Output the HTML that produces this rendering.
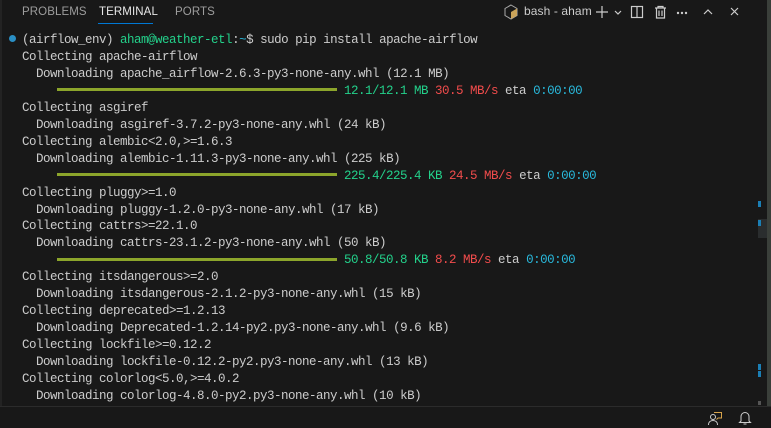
<!DOCTYPE html>
<html style="height:428px;overflow:hidden"><head><style>
body{margin:0;width:771px;height:428px;background:#181818;overflow:hidden;position:relative;font-family:"Liberation Sans",sans-serif}
.tabs{position:absolute;top:0;left:0;height:26px;width:771px}
.tab{position:absolute;top:6px;font-size:11.5px;color:#9d9d9d;letter-spacing:0.1px}
.term{position:absolute;left:22px;top:32px;font-family:"Liberation Mono",monospace;font-size:12.5px;letter-spacing:-0.5px;line-height:16.95px;color:#cccccc;white-space:pre}
.g{color:#23d18b}.r{color:#f14c4c}.b{color:#29b8db}
.bar{display:inline-block;width:280px;height:3px;background:#8ca52b;vertical-align:middle;margin:0 7px 0 35px;position:relative;top:-1px}
.status{position:absolute;left:0;top:406px;width:771px;height:22px;background:#181818;border-top:1px solid #2b2b2b}
.mk{position:absolute;left:758px;width:3px;height:6px;background:#1b7fb5}
</style></head><body>
<div style="position:absolute;left:0;top:0;width:2px;height:428px;background:#232323"></div>
<div style="position:absolute;left:767px;top:0;width:4px;height:428px;background:#3a3f3a"></div>
<div class="tabs">
<span class="tab" style="left:22px">PROBLEMS</span>
<span class="tab" style="left:99px;color:#e7e7e7">TERMINAL</span>
<div style="position:absolute;left:98px;top:23px;width:55px;height:1px;background:#0078d4"></div>
<span class="tab" style="left:175px">PORTS</span>
<svg style="position:absolute;left:504px;top:4px" width="14" height="16" viewBox="0 0 14 16"><path d="M7 1L13 4.5V11.5L7 15L1 11.5V4.5Z" fill="none" stroke="#aaa" stroke-width="1"/><path d="M7 8L13 4.5V11.5L7 15Z" fill="#c9a35a"/></svg>
<span class="tab" style="left:524px;color:#ccc;font-size:12px;top:4px">bash - aham</span>
<svg style="position:absolute;left:595px;top:4px" width="150" height="16" viewBox="0 0 150 16" fill="none" stroke="#ccc" stroke-width="1.2">
<path d="M1 8H13M7 2V14"/><path d="M20 7l3 3 3-3"/>
<rect x="36.5" y="2.5" width="11" height="11"/><path d="M42 2.5V13.5"/>
<path d="M60 4H71M63 4V2.5H68V4M61.5 4.5V14H69.5V4.5M64 6.5V12M67 6.5V12"/>
<circle cx="83" cy="9" r=".6" fill="#ccc"/><circle cx="87" cy="9" r=".6" fill="#ccc"/><circle cx="91" cy="9" r=".6" fill="#ccc"/>
<path d="M109 10l4-4 4 4"/><path d="M136 4l7 7M143 4l-7 7"/>
</svg>
</div>
<div style="position:absolute;left:9px;top:35px;width:7px;height:7px;border-radius:50%;background:#2a8fc4"></div>
<div class="term">(airflow_env) <span class="g">aham@weather-etl</span>:<span class="b">~</span>$ sudo pip install apache-airflow
Collecting apache-airflow
  Downloading apache_airflow-2.6.3-py3-none-any.whl (12.1 MB)
<span class="bar"></span><span class="g">12.1/12.1 MB</span> <span class="r">30.5 MB/s</span> eta <span class="b">0:00:00</span>
Collecting asgiref
  Downloading asgiref-3.7.2-py3-none-any.whl (24 kB)
Collecting alembic&lt;2.0,&gt;=1.6.3
  Downloading alembic-1.11.3-py3-none-any.whl (225 kB)
<span class="bar"></span><span class="g">225.4/225.4 KB</span> <span class="r">24.5 MB/s</span> eta <span class="b">0:00:00</span>
Collecting pluggy&gt;=1.0
  Downloading pluggy-1.2.0-py3-none-any.whl (17 kB)
Collecting cattrs&gt;=22.1.0
  Downloading cattrs-23.1.2-py3-none-any.whl (50 kB)
<span class="bar"></span><span class="g">50.8/50.8 KB</span> <span class="r">8.2 MB/s</span> eta <span class="b">0:00:00</span>
Collecting itsdangerous&gt;=2.0
  Downloading itsdangerous-2.1.2-py3-none-any.whl (15 kB)
Collecting deprecated&gt;=1.2.13
  Downloading Deprecated-1.2.14-py2.py3-none-any.whl (9.6 kB)
Collecting lockfile&gt;=0.12.2
  Downloading lockfile-0.12.2-py2.py3-none-any.whl (13 kB)
Collecting colorlog&lt;5.0,&gt;=4.0.2
  Downloading colorlog-4.8.0-py2.py3-none-any.whl (10 kB)</div>
<div class="mk" style="top:201px"></div>
<div style="position:absolute;left:758px;top:219px;width:9px;height:19px;background:#2a2d2e"></div>
<div class="mk" style="top:220px"></div>
<div class="mk" style="top:364px"></div>
<div class="mk" style="top:371px"></div>
<div style="position:absolute;left:758px;top:401px;width:3px;height:4px;background:#555"></div>
<div class="status">
<svg style="position:absolute;left:707px;top:3px" width="16" height="16" viewBox="0 0 16 16" fill="none" stroke="#ccc" stroke-width="1"><circle cx="6" cy="7" r="2.5"/><path d="M1.5 15c0-3 2-4.5 4.5-4.5S10.5 12 10.5 15"/><path d="M7 2.5H14.5V8H11L9.5 9.5" stroke="#d7a34a"/></svg>
<svg style="position:absolute;left:738px;top:3px" width="14" height="16" viewBox="0 0 14 16" fill="none" stroke="#ccc" stroke-width="1"><path d="M3 11V6.5a4 4 0 0 1 8 0V11l1.5 1.5h-11Z"/><path d="M5.5 14h3"/></svg>
</div>
</body></html>
